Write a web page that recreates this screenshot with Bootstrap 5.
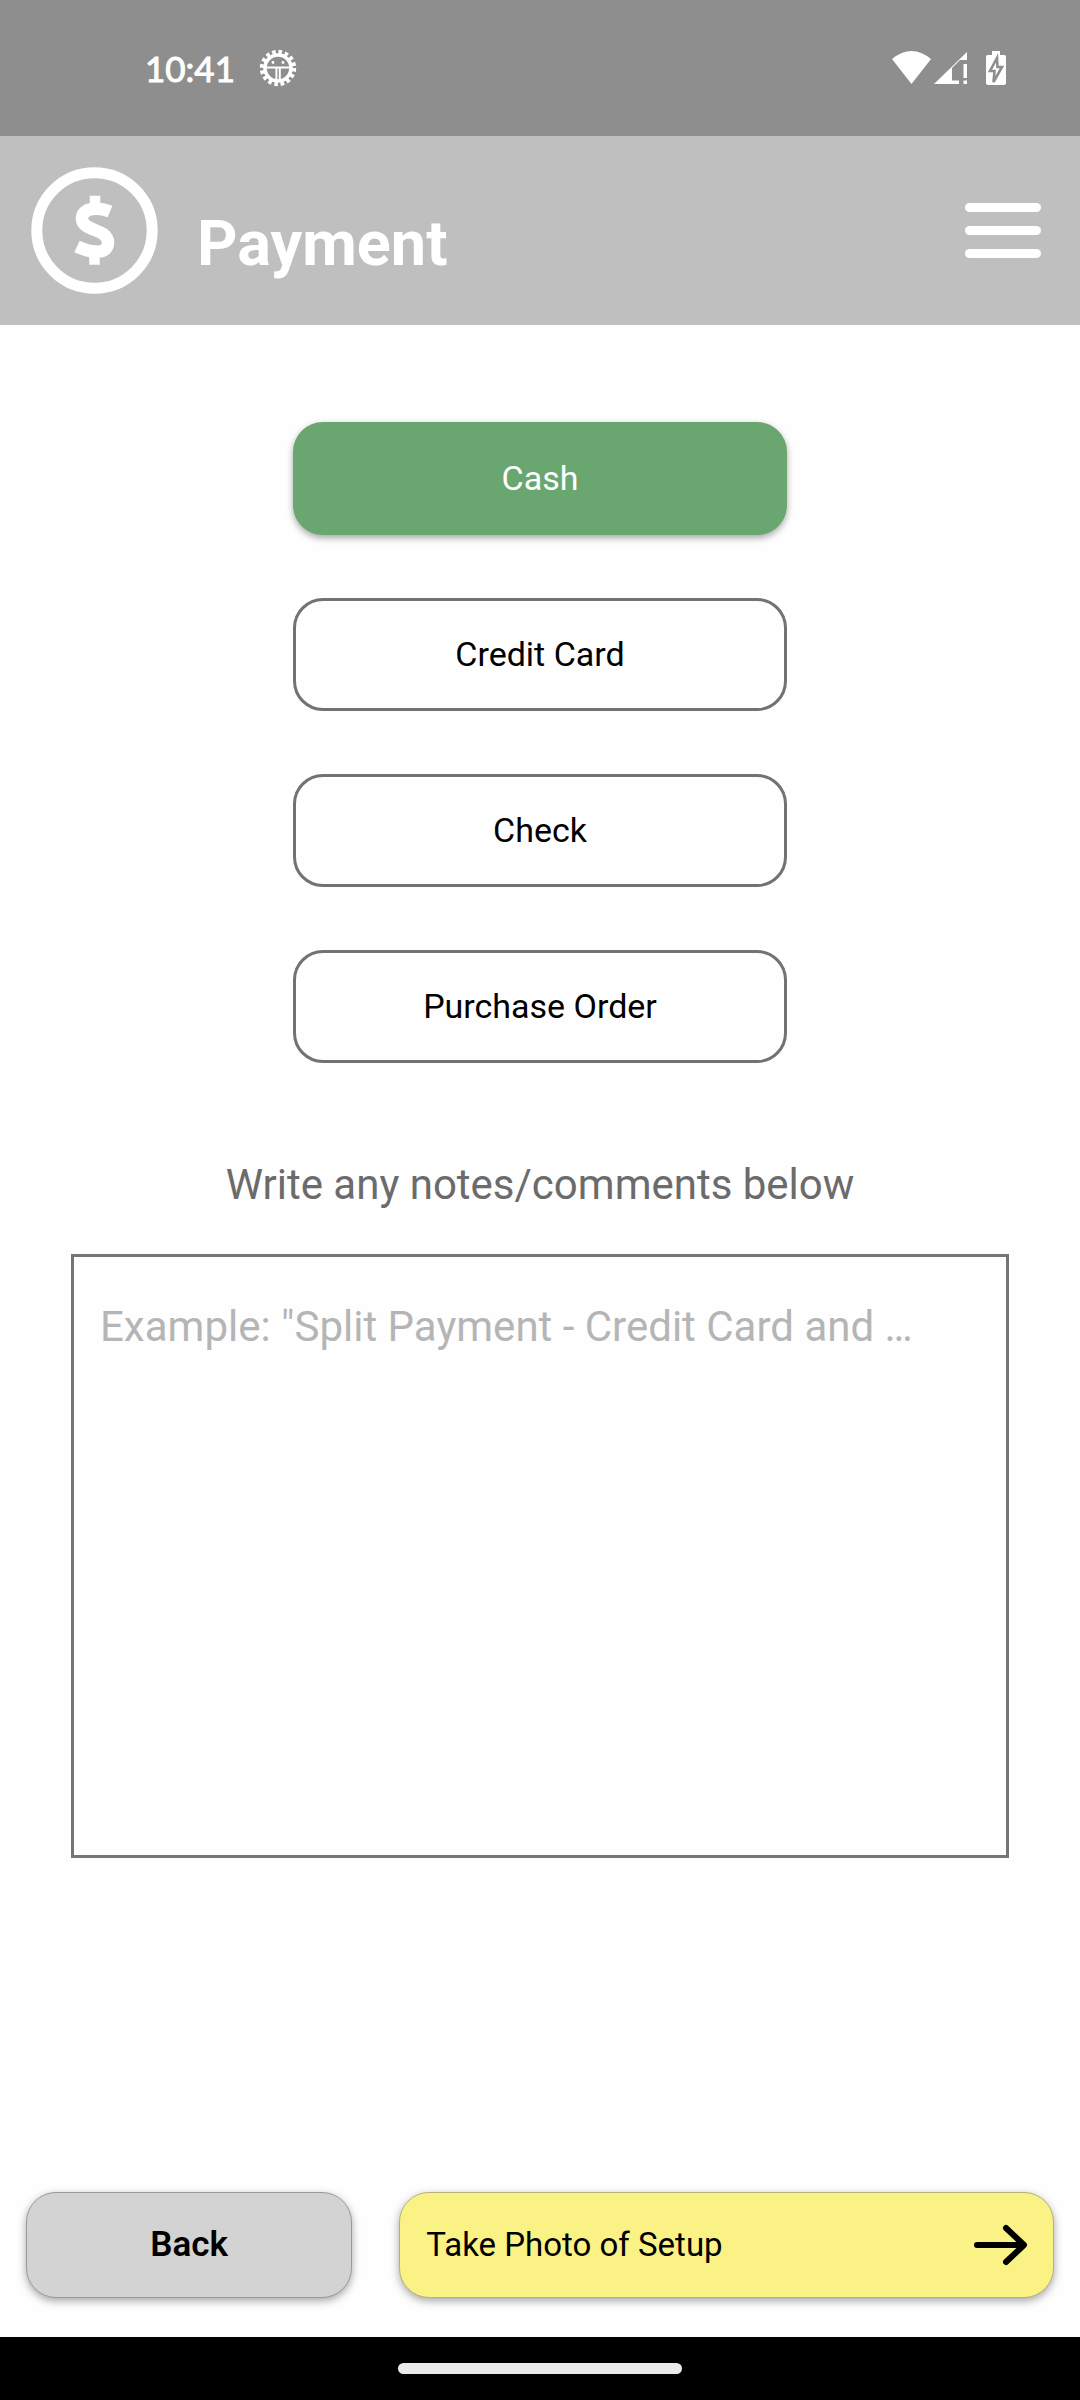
<!DOCTYPE html>
<html lang="en">
<head>
<meta charset="utf-8">
<meta name="viewport" content="width=device-width, initial-scale=1">
<title>Payment</title>
<link href="https://cdn.jsdelivr.net/npm/bootstrap@5.3.0/dist/css/bootstrap.min.css" rel="stylesheet">
<style>
body { font-family: Roboto, "Liberation Sans", sans-serif; background: #fefefe; color: #000; }
svg { display: block; flex: none; }
.status-bar { background: #8e8e8e; height: 136px; padding: 0 72px 0 145px; color: #fff; }
.clock { font-family: Lato, sans-serif; font-size: 35px; line-height: 40px; -webkit-text-stroke: 1px #fff; }
.app-bar { background: #bfbfbf; height: 189px; padding: 0 38px 0 31px; }
.app-title { color: #fff; font-size: 63px; line-height: 74px; font-weight: 700; padding-top: 26px; margin-left: 39px; }
.menu-toggle { padding: 0; border: 0; border-radius: 0; }
.content { padding: 97px 71px 40px; }
.methods { gap: 63px; }
.method { width: 494px; height: 113px; border-radius: 30px; border: 3px solid #727272; background: transparent; color: #000; font-size: 34px; line-height: 40px; padding: 0 12px 2px; }
.method.active, .method.active:hover { background: #6aa66f; border-color: #6aa66f; color: #fff; box-shadow: 0 3px 7px rgba(0,0,0,.35); }
.notes-label { color: #6b6b6b; font-size: 42px; line-height: 50px; margin: 97px 0 44px; }
.notes { height: 604px; border: 3px solid #757575; border-radius: 0; background: transparent; font-size: 42px; line-height: 50px; padding: 45px 26px; resize: none; }
.notes::placeholder { color: #b5b5b5; }
.actions { padding: 0 26px 39px; gap: 47px; }
.action { height: 106px; border-radius: 30px; border: 1px solid #9a9a9a; color: #000; font-size: 33px; line-height: 40px; box-shadow: 0 3px 8px rgba(0,0,0,.35); }
.back { flex: 1 1 0; background: #d3d3d3; font-size: 35px; font-weight: 600; }
.photo { flex: 2 1 0; background: #fbf285; border-color: #b5b178; padding: 0 26px; }
.gesture-bar { background: #000; height: 63px; }
.gesture-pill { width: 284px; height: 11px; border-radius: 6px; background: #ebebeb; }
</style>
</head>
<body class="d-flex flex-column min-vh-100">
<div class="status-bar d-flex align-items-center">
  <span class="clock">10:41</span>
  <svg class="ms-4" width="38" height="38" viewBox="0 0 38 38" fill="none" stroke="#fff">
    <circle cx="19" cy="19" r="13" stroke-width="3.6"/>
    <circle cx="19" cy="19" r="16" stroke-width="4.4" stroke-dasharray="3.5 2.783"/>
    <path d="M6 18.500H32M17.400 19V32M20.800 19V32" stroke-width="2"/>
    <circle cx="14" cy="13.500" r="1.400" fill="#fff" stroke="none"/><circle cx="24" cy="13.500" r="1.400" fill="#fff" stroke="none"/>
  </svg>
  <svg class="ms-auto" width="116" height="36" viewBox="0 0 116 36" fill="#fff">
    <path d="M0 9Q19.500-7 39 9L19.500 34Z"/>
    <path d="M42 34 75 2V10H68L60 18V30.500H67V34Z"/>
    <path d="M71.500 14H75V28H71.500ZM71.500 30.500H75V34H71.500Z"/>
    <path d="M96 5H100V1H108V5H112Q114 5 114 7V33Q114 35 112 35H96Q94 35 94 33V7Q94 5 96 5Z"/>
    <path d="M105 8 98 21H102.500L101.500 32 110 17H105.500Z" fill="#fff" stroke="#8e8e8e" stroke-width="2.600"/>
  </svg>
</div>
<header class="app-bar d-flex align-items-center">
  <svg width="127" height="128" viewBox="0 0 127 128" fill="none" stroke="#fff">
    <circle cx="63.500" cy="63.500" r="57.700" stroke-width="11"/>
    <path d="M79 44.500C68 40 51 40 51 51.500C51 65 77 61 77 75.500C77 88 60 86 46 79.500" stroke-width="12.500" stroke-linejoin="round"/>
    <path d="M64 34V42M63.500 84V92.500" stroke-width="10.500" stroke-linecap="square"/>
  </svg>
  <h1 class="app-title mb-0">Payment</h1>
  <button type="button" class="menu-toggle btn ms-auto" aria-label="Menu">
    <svg width="78" height="58" viewBox="0 0 78 58" fill="#fff"><rect x="1" y="1" width="76" height="9" rx="4.500"/><rect x="1" y="24" width="76" height="9" rx="4.500"/><rect x="1" y="47" width="76" height="9" rx="4.500"/></svg>
  </button>
</header>
<main class="content flex-grow-1 d-flex flex-column">
  <div class="methods d-flex flex-column align-items-center">
    <button type="button" class="method btn active" aria-pressed="true">Cash</button>
    <button type="button" class="method btn">Credit Card</button>
    <button type="button" class="method btn">Check</button>
    <button type="button" class="method btn">Purchase Order</button>
  </div>
  <label for="notes" class="notes-label text-center">Write any notes/comments below</label>
  <textarea id="notes" class="notes form-control" placeholder='Example: "Split Payment - Credit Card and …'></textarea>
</main>
<footer class="actions d-flex">
  <button type="button" class="action back btn">Back</button>
  <button type="button" class="action photo btn d-flex align-items-center justify-content-between">Take Photo of Setup
    <svg width="54" height="42" viewBox="0 0 54 42" fill="none" stroke="#000" stroke-width="6" stroke-linecap="round" stroke-linejoin="round"><path d="M4 21H50M33 4 51 21 33 38"/></svg>
  </button>
</footer>
<div class="gesture-bar d-flex justify-content-center align-items-center"><div class="gesture-pill"></div></div>
<script src="https://cdn.jsdelivr.net/npm/bootstrap@5.3.0/dist/js/bootstrap.bundle.min.js"></script>
</body>
</html>
